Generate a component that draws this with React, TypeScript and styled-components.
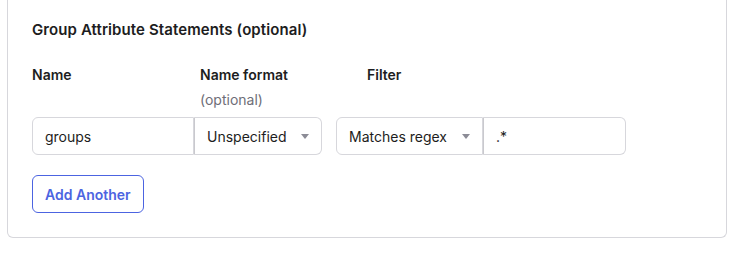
import React from "react";
import styled, { createGlobalStyle } from "styled-components";

const GlobalStyle = createGlobalStyle`
  html, body {
    margin: 0;
    padding: 0;
    background: #ffffff;
    font-family: Inter, "Noto Sans", "Liberation Sans", sans-serif;
    color: #1d1d21;
  }
`;

const Page = styled.div`
  padding: 0 13px 0 7px;
  height: 253px;
  box-sizing: border-box;
`;

const Card = styled.section`
  border: 1px solid #d7d7dc;
  border-top: 0;
  border-radius: 0 0 6px 6px;
  padding: 20px 24px 24px;
  height: 238px;
  box-sizing: border-box;
`;

const Title = styled.h3`
  margin: 0;
  font-size: 15px;
  font-weight: 600;
  line-height: 20px;
  letter-spacing: 0.1px;
`;

const Fields = styled.div`
  display: grid;
  grid-template-columns: 162px 128px 14px 147px 143px;
  margin-top: 25px;
`;

const Label = styled.div<{ $indent?: number }>`
  padding-left: ${(p) => p.$indent ?? 0}px;
  font-size: 14px;
  font-weight: 600;
  line-height: 20px;
`;

const Hint = styled.div`
  margin-top: 5px;
  font-size: 14px;
  font-weight: 400;
  line-height: 20px;
  color: #6e6e78;
`;

const Cell = styled.div<{ $edge: "left" | "right" }>`
  display: flex;
  align-items: center;
  height: 38px;
  margin-top: 7px;
  box-sizing: border-box;
  border: 1px solid #d7d7dc;
  border-left-width: ${(p) => (p.$edge === "right" ? 0 : 1)}px;
  border-radius: ${(p) => (p.$edge === "left" ? "6px 0 0 6px" : "0 6px 6px 0")};
  padding: 0 12px;
  font-size: 14px;
  color: #1d1d21;
`;

const Divided = styled(Cell)`
  border-left: 1px solid #c9c9ce;
`;

const SelectText = styled.span`
  flex: 1;
`;

const Caret = styled.span`
  width: 0;
  height: 0;
  border-left: 4px solid transparent;
  border-right: 4px solid transparent;
  border-top: 5px solid #8c8c96;
`;

const Spacer = styled.div``;

const AddButton = styled.button`
  margin-top: 20px;
  height: 38px;
  padding: 0 12px;
  border: 1px solid #4c64e1;
  border-radius: 6px;
  background: #ffffff;
  color: #4c64e1;
  font-family: inherit;
  font-size: 14px;
  font-weight: 600;
`;

const App: React.FC = () => {
  return (
    <>
      <GlobalStyle />
      <Page>
        <Card>
          <Title>Group Attribute Statements (optional)</Title>
          <Fields>
            <Label>Name</Label>
            <Label $indent={6}>
              Name format
              <Hint>(optional)</Hint>
            </Label>
            <Spacer />
            <Label $indent={31}>Filter</Label>
            <Spacer />

            <Cell $edge="left">groups</Cell>
            <Divided $edge="right">
              <SelectText>Unspecified</SelectText>
              <Caret />
            </Divided>
            <Spacer />
            <Cell $edge="left">
              <SelectText>Matches regex</SelectText>
              <Caret />
            </Cell>
            <Divided $edge="right">.*</Divided>
          </Fields>
          <AddButton>Add Another</AddButton>
        </Card>
      </Page>
    </>
  );
};

export default App;
